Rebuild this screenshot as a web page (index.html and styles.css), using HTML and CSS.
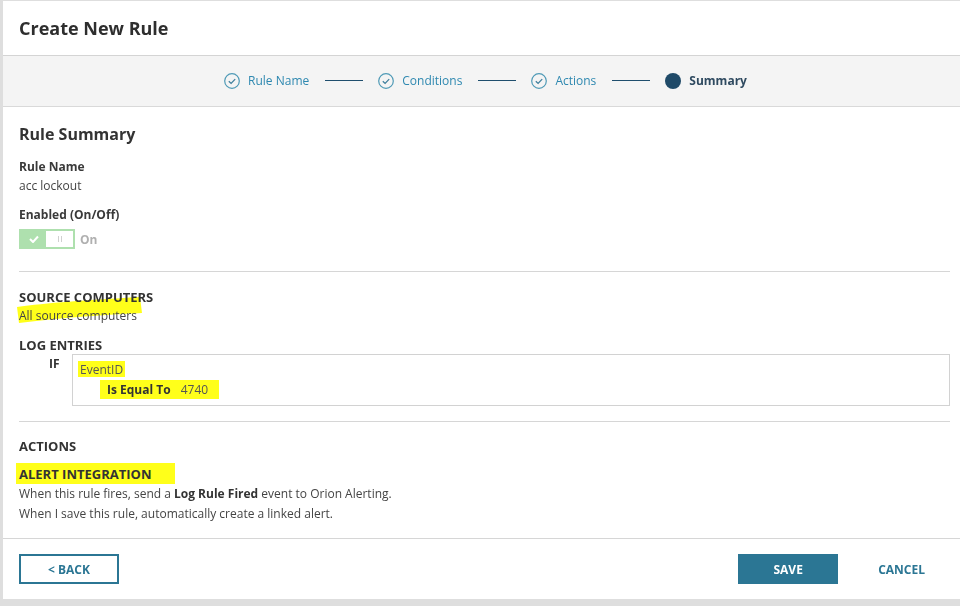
FILE: index.html
```html
<!DOCTYPE html>
<html>
<head>
<meta charset="utf-8">
<link rel="stylesheet" href="styles.css">
</head>
<body>
<div class="card">
  <div class="header"><h1>Create New Rule</h1></div>
  <div class="stepper">
    <div class="step done">
      <svg class="ico" viewBox="0 0 16 16"><circle cx="8" cy="8" r="7.3" fill="none" stroke="#4f9ab6" stroke-width="1.2"/><path d="M4.8 8.2 L7.1 10.4 L11.2 6.1" fill="none" stroke="#3f7f9c" stroke-width="1.3"/></svg>
      <span>Rule Name</span>
    </div>
    <div class="line"></div>
    <div class="step done">
      <svg class="ico" viewBox="0 0 16 16"><circle cx="8" cy="8" r="7.3" fill="none" stroke="#4f9ab6" stroke-width="1.2"/><path d="M4.8 8.2 L7.1 10.4 L11.2 6.1" fill="none" stroke="#3f7f9c" stroke-width="1.3"/></svg>
      <span>Conditions</span>
    </div>
    <div class="line"></div>
    <div class="step done">
      <svg class="ico" viewBox="0 0 16 16"><circle cx="8" cy="8" r="7.3" fill="none" stroke="#4f9ab6" stroke-width="1.2"/><path d="M4.8 8.2 L7.1 10.4 L11.2 6.1" fill="none" stroke="#3f7f9c" stroke-width="1.3"/></svg>
      <span>Actions</span>
    </div>
    <div class="line"></div>
    <div class="step current">
      <svg class="ico" viewBox="0 0 16 16"><circle cx="8" cy="8" r="8" fill="#1f4a68"/></svg>
      <span>Summary</span>
    </div>
  </div>

  <div class="content">
    <h2>Rule Summary</h2>
    <div class="label first">Rule Name</div>
    <div class="value name">acc lockout</div>
    <div class="label second">Enabled (On/Off)</div>
    <div class="toggle-row">
      <div class="toggle">
        <div class="t-on"><svg viewBox="0 0 10 8" width="10" height="8"><path d="M1 4 L4 7 L9 1.5" fill="none" stroke="#fff" stroke-width="2"/></svg></div>
        <div class="t-off"><span></span><span></span></div>
      </div>
      <span class="on-label">On</span>
    </div>

    <div class="divider d1"></div>

    <div class="section src">
      <svg class="hl-src" viewBox="0 0 128 28" width="128" height="28" preserveAspectRatio="none"><path d="M1 10 C30 6 70 3 124 0 L126 16 C90 18 50 20 3 26 Z" fill="#ffff1a"/></svg>
      <div class="sec-title">SOURCE COMPUTERS</div>
      <div class="value">All source computers</div>
    </div>

    <div class="sec-title log">LOG ENTRIES</div>
    <div class="if-row">
      <div class="if">IF</div>
      <div class="cond-box">
        <div class="cond-field"><span class="hl hl-event">EventID</span></div>
        <div class="cond-op"><span class="hl hl-op"><b>Is Equal To</b><span class="num">4740</span></span></div>
      </div>
    </div>

    <div class="divider d2"></div>

    <div class="sec-title actions">ACTIONS</div>
    <div class="sec-title alert"><span class="hl hl-alert">ALERT INTEGRATION</span></div>
    <p class="text">When this rule fires, send a <b>Log Rule Fired</b> event to Orion Alerting.</p>
    <p class="text">When I save this rule, automatically create a linked alert.</p>
  </div>

  <div class="footer">
    <button class="btn back">&lt; BACK</button>
    <div class="right">
      <button class="btn save">SAVE</button>
      <button class="btn cancel">CANCEL</button>
    </div>
  </div>
</div>
</body>
</html>
```

FILE: styles.css
```css
* { box-sizing: border-box; }
html, body { margin: 0; padding: 0; }
body {
  background: #dedede;
  font-family: "Open Sans", "Noto Sans", sans-serif;
  color: #333;
  width: 960px;
  height: 606px;
  overflow: hidden;
}
.card {
  margin: 1px 0 0 3px;
  width: 957px;
  height: 598px;
  background: #fff;
  display: flex;
  flex-direction: column;
}
.header {
  height: 55px;
  padding-left: 16px;
  display: flex;
  align-items: center;
  border-bottom: 1px solid #d4d4d4;
}
.header h1 {
  margin: 0;
  font-size: 18px;
  font-weight: 700;
  color: #2e2e2e;
}
.stepper {
  height: 51px;
  background: #f4f4f4;
  border-bottom: 1px solid #d9d9d9;
  display: flex;
  align-items: center;
  justify-content: center;
  padding-left: 8px;
  padding-bottom: 1px;
}
.step {
  display: flex;
  align-items: center;
  gap: 8px;
  font-size: 12px;
}
.step .ico { width: 16px; height: 16px; display: block; }
.step.done span { color: #2e88b0; }
.step.current span { color: #2f4a60; font-weight: 700; }
.line {
  width: 38px;
  height: 1.5px;
  background: #1f4e6d;
  margin: 0 15px 0 16px;
}
.content {
  padding: 16px 10px 0 16px;
  flex: 0 0 auto;
}
h2 {
  margin: 0;
  font-size: 16px;
  line-height: 22px;
  font-weight: 700;
  color: #333;
}
.label {
  font-size: 12px;
  font-weight: 700;
  line-height: 18px;
  color: #3a3a3a;
}
.label.first { margin-top: 13px; }
.label.second { margin-top: 11px; }
.value {
  font-size: 12px;
  line-height: 18px;
  color: #444;
}
.value.name { margin-top: 1px; }
.toggle-row {
  margin-top: 5px;
  display: flex;
  align-items: center;
  gap: 5px;
}
.toggle {
  width: 56px;
  height: 20px;
  border: 2px solid #aee0ae;
  display: flex;
  background: #fff;
}
.t-on {
  width: 25px;
  background: #aee0ae;
  display: flex;
  align-items: center;
  justify-content: center;
}
.t-off {
  flex: 1;
  display: flex;
  align-items: center;
  justify-content: center;
  gap: 2px;
}
.t-off span { width: 1px; height: 6px; background: #d0d0d0; display: block; }
.on-label { font-size: 12px; font-weight: 700; color: #b0b0b0; }
.divider {
  height: 1px;
  background: #d6d6d6;
}
.d1 { margin-top: 22px; }
.d2 { margin-top: 15px; }
.section.src { position: relative; margin-top: 15px; }
.hl-src {
  position: absolute;
  left: -3px;
  top: 10px;
  mix-blend-mode: multiply;
  pointer-events: none;
}
.sec-title {
  font-size: 13px;
  font-weight: 700;
  line-height: 20px;
  color: #333;
  position: relative;
}
.src .value { position: relative; }
.sec-title.log { margin-top: 11px; line-height: 18px; }
.if-row {
  display: flex;
  align-items: flex-start;
}
.if {
  width: 53px;
  padding-left: 30px;
  font-size: 12px;
  font-weight: 700;
  line-height: 18px;
  padding-top: 1px;
  color: #333;
}
.cond-box {
  flex: 1;
  height: 52px;
  border: 1px solid #d2d2d2;
  padding: 6px 0 0 5px;
  font-size: 12px;
}
.hl { background: #ffff1a; }
.cond-field { line-height: 18px; }
.hl-event { display: inline-block; padding: 1px 2px 0 2px; line-height: 15px; color: #555; }
.cond-op { margin-top: 1px; padding-left: 29px; }
.hl-op { display: inline-block; padding: 2px 11px 2px 7px; line-height: 15px; margin-left: -7px; }
.hl-op b { color: #333; }
.hl-op .num { margin-left: 10px; color: #555; }
.sec-title.actions { margin-top: 15px; line-height: 18px; }
.sec-title.alert { margin-top: 8px; line-height: 18px; }
.hl-alert { display: inline-block; padding: 2px 24px 1px 3px; margin-left: -3px; line-height: 18px; }
.text {
  margin: 0;
  font-size: 12px;
  line-height: 20px;
  color: #444;
}
.text b { color: #333; }
.footer {
  margin-top: auto;
  height: 61px;
  border-top: 1px solid #d6d6d6;
  padding: 15px 16px 0 16px;
  display: flex;
  justify-content: space-between;
  align-items: flex-start;
}
.right { display: flex; align-items: center; }
.btn {
  font-family: "Open Sans", "Noto Sans", sans-serif;
  font-size: 12px;
  font-weight: 700;
  cursor: pointer;
}
.back {
  width: 100px;
  height: 30px;
  border: 2px solid #2b7694;
  background: #fff;
  color: #2b7694;
}
.save {
  width: 100px;
  height: 30px;
  border: none;
  background: #2b7694;
  color: #fff;
}
.cancel {
  border: none;
  background: none;
  color: #2b7694;
  margin-left: 40px;
  margin-right: 19px;
  padding: 0;
  height: 30px;
}
```
